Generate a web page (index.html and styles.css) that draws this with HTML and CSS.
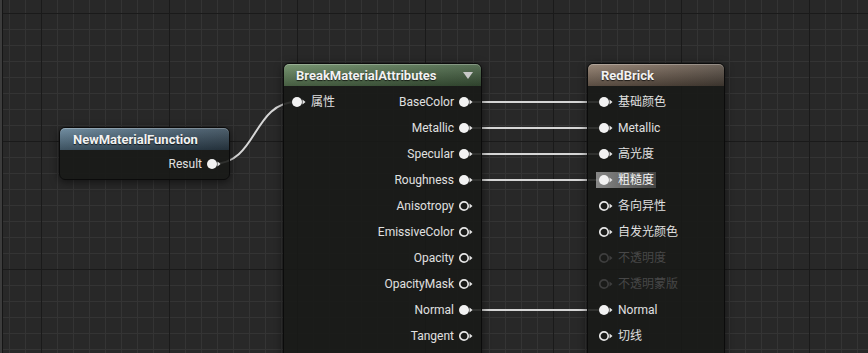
FILE: index.html
```html
<!DOCTYPE html>
<html lang="zh">
<head>
    <meta charset="UTF-8">
    <title>Material Graph - RedBrick</title>
    <link rel="stylesheet" href="styles.css">
</head>
<body>
    <div class="graph">
        <!-- wires sit under the nodes -->
        <svg class="wires" width="868" height="353" viewBox="0 0 868 353">
            <path d="M213 164 C258 164 252 102 297 102" />
            <path d="M464 102 L604 102" />
            <path d="M464 128 L604 128" />
            <path d="M464 154 L604 154" />
            <path d="M464 180 L604 180" />
            <path d="M464 310 L604 310" />
        </svg>

        <div class="node node-fn">
            <div class="node-header header-blue">NewMaterialFunction</div>
            <div class="node-body">
                <div class="pin-row out">
                    <span class="pin-label">Result</span>
                    <svg class="pin" width="14" height="12"><circle cx="5" cy="6" r="5" class="full"/><path d="M10.5 3.5 L13.5 6 L10.5 8.5 Z"/></svg>
                </div>
            </div>
        </div>

        <div class="node node-break">
            <div class="node-header header-green">
                <span>BreakMaterialAttributes</span>
                <span class="dropdown"></span>
            </div>
            <div class="node-body">
                <div class="pin-row split">
                    <div class="pin-item">
                        <svg class="pin" width="14" height="12"><circle cx="5" cy="6" r="5" class="full"/><path d="M10.5 3.5 L13.5 6 L10.5 8.5 Z"/></svg>
                        <span class="pin-label">属性</span>
                    </div>
                    <div class="pin-item">
                        <span class="pin-label">BaseColor</span>
                        <svg class="pin" width="14" height="12"><circle cx="5" cy="6" r="5" class="full"/><path d="M10.5 3.5 L13.5 6 L10.5 8.5 Z"/></svg>
                    </div>
                </div>
                <div class="pin-row out">
                    <span class="pin-label">Metallic</span>
                    <svg class="pin" width="14" height="12"><circle cx="5" cy="6" r="5" class="full"/><path d="M10.5 3.5 L13.5 6 L10.5 8.5 Z"/></svg>
                </div>
                <div class="pin-row out">
                    <span class="pin-label">Specular</span>
                    <svg class="pin" width="14" height="12"><circle cx="5" cy="6" r="5" class="full"/><path d="M10.5 3.5 L13.5 6 L10.5 8.5 Z"/></svg>
                </div>
                <div class="pin-row out">
                    <span class="pin-label">Roughness</span>
                    <svg class="pin" width="14" height="12"><circle cx="5" cy="6" r="5" class="full"/><path d="M10.5 3.5 L13.5 6 L10.5 8.5 Z"/></svg>
                </div>
                <div class="pin-row out">
                    <span class="pin-label">Anisotropy</span>
                    <svg class="pin" width="14" height="12"><circle cx="5" cy="6" r="4.2" class="ring"/><path d="M10.5 3.5 L13.5 6 L10.5 8.5 Z"/></svg>
                </div>
                <div class="pin-row out">
                    <span class="pin-label">EmissiveColor</span>
                    <svg class="pin" width="14" height="12"><circle cx="5" cy="6" r="4.2" class="ring"/><path d="M10.5 3.5 L13.5 6 L10.5 8.5 Z"/></svg>
                </div>
                <div class="pin-row out">
                    <span class="pin-label">Opacity</span>
                    <svg class="pin" width="14" height="12"><circle cx="5" cy="6" r="4.2" class="ring"/><path d="M10.5 3.5 L13.5 6 L10.5 8.5 Z"/></svg>
                </div>
                <div class="pin-row out">
                    <span class="pin-label">OpacityMask</span>
                    <svg class="pin" width="14" height="12"><circle cx="5" cy="6" r="4.2" class="ring"/><path d="M10.5 3.5 L13.5 6 L10.5 8.5 Z"/></svg>
                </div>
                <div class="pin-row out">
                    <span class="pin-label">Normal</span>
                    <svg class="pin" width="14" height="12"><circle cx="5" cy="6" r="5" class="full"/><path d="M10.5 3.5 L13.5 6 L10.5 8.5 Z"/></svg>
                </div>
                <div class="pin-row out">
                    <span class="pin-label">Tangent</span>
                    <svg class="pin" width="14" height="12"><circle cx="5" cy="6" r="4.2" class="ring"/><path d="M10.5 3.5 L13.5 6 L10.5 8.5 Z"/></svg>
                </div>
            </div>
        </div>

        <div class="node node-brick">
            <div class="node-header header-brown">RedBrick</div>
            <div class="node-body">
                <div class="pin-row">
                    <div class="pin-item">
                        <svg class="pin" width="14" height="12"><circle cx="5" cy="6" r="5" class="full"/><path d="M10.5 3.5 L13.5 6 L10.5 8.5 Z"/></svg>
                        <span class="pin-label">基础颜色</span>
                    </div>
                </div>
                <div class="pin-row">
                    <div class="pin-item">
                        <svg class="pin" width="14" height="12"><circle cx="5" cy="6" r="5" class="full"/><path d="M10.5 3.5 L13.5 6 L10.5 8.5 Z"/></svg>
                        <span class="pin-label">Metallic</span>
                    </div>
                </div>
                <div class="pin-row">
                    <div class="pin-item">
                        <svg class="pin" width="14" height="12"><circle cx="5" cy="6" r="5" class="full"/><path d="M10.5 3.5 L13.5 6 L10.5 8.5 Z"/></svg>
                        <span class="pin-label">高光度</span>
                    </div>
                </div>
                <div class="pin-row">
                    <div class="pin-item hovered">
                        <svg class="pin" width="14" height="12"><circle cx="5" cy="6" r="5" class="full"/><path d="M10.5 3.5 L13.5 6 L10.5 8.5 Z"/></svg>
                        <span class="pin-label">粗糙度</span>
                    </div>
                </div>
                <div class="pin-row">
                    <div class="pin-item">
                        <svg class="pin" width="14" height="12"><circle cx="5" cy="6" r="4.2" class="ring"/><path d="M10.5 3.5 L13.5 6 L10.5 8.5 Z"/></svg>
                        <span class="pin-label">各向异性</span>
                    </div>
                </div>
                <div class="pin-row">
                    <div class="pin-item">
                        <svg class="pin" width="14" height="12"><circle cx="5" cy="6" r="4.2" class="ring"/><path d="M10.5 3.5 L13.5 6 L10.5 8.5 Z"/></svg>
                        <span class="pin-label">自发光颜色</span>
                    </div>
                </div>
                <div class="pin-row disabled">
                    <div class="pin-item">
                        <svg class="pin" width="14" height="12"><circle cx="5" cy="6" r="4.2" class="ring"/><path d="M10.5 3.5 L13.5 6 L10.5 8.5 Z"/></svg>
                        <span class="pin-label">不透明度</span>
                    </div>
                </div>
                <div class="pin-row disabled">
                    <div class="pin-item">
                        <svg class="pin" width="14" height="12"><circle cx="5" cy="6" r="4.2" class="ring"/><path d="M10.5 3.5 L13.5 6 L10.5 8.5 Z"/></svg>
                        <span class="pin-label">不透明蒙版</span>
                    </div>
                </div>
                <div class="pin-row">
                    <div class="pin-item">
                        <svg class="pin" width="14" height="12"><circle cx="5" cy="6" r="5" class="full"/><path d="M10.5 3.5 L13.5 6 L10.5 8.5 Z"/></svg>
                        <span class="pin-label">Normal</span>
                    </div>
                </div>
                <div class="pin-row">
                    <div class="pin-item">
                        <svg class="pin" width="14" height="12"><circle cx="5" cy="6" r="4.2" class="ring"/><path d="M10.5 3.5 L13.5 6 L10.5 8.5 Z"/></svg>
                        <span class="pin-label">切线</span>
                    </div>
                </div>
            </div>
        </div>
    </div>
</body>
</html>
```

FILE: styles.css
```css
/* Base */
body {
    margin: 0;
    padding: 0;
    background-color: #282828;
    font-family: Roboto, "Noto Sans CJK SC", sans-serif;
    font-size: 12px;
    color: #e0e0e0;
    overflow: hidden;
}

/* Graph canvas with major (128px) and minor (16px) grid */
.graph {
    position: relative;
    width: 868px;
    height: 353px;
    overflow: hidden;
    background-color: #282828;
    background-image:
        linear-gradient(to right, #1a1a1a 1px, transparent 1px),
        linear-gradient(to bottom, #1a1a1a 1px, transparent 1px),
        linear-gradient(to right, #343434 1px, transparent 1px),
        linear-gradient(to bottom, #343434 1px, transparent 1px);
    background-size: 128px 128px, 128px 128px, 16px 16px, 16px 16px;
    background-position: 41px 0, 0 13px, 9px 0, 0 13px;
    box-shadow: inset 2px 0 0 #3c3c3c, inset 3px 0 0 #151515;
}

.wires {
    position: absolute;
    left: 0;
    top: 0;
}

.wires path {
    fill: none;
    stroke: #d6d6d6;
    stroke-width: 2;
}

/* Nodes */
.node {
    position: absolute;
    box-sizing: border-box;
    background-color: rgba(24, 25, 23, 0.88);
    border: 1px solid #0b0b0b;
    border-radius: 6px;
    box-shadow: 0 2px 8px rgba(0, 0, 0, 0.55);
}

.node-fn {
    left: 59px;
    top: 127px;
    width: 171px;
}

.node-break {
    left: 283px;
    top: 63px;
    width: 199px;
    height: 320px;
}

.node-brick {
    left: 587px;
    top: 63px;
    width: 138px;
    height: 320px;
}

.node-header {
    display: flex;
    align-items: center;
    height: 22px;
    padding: 0 8px 0 12px;
    border-radius: 5px 5px 0 0;
    font-size: 13px;
    font-weight: bold;
    color: #f2f2f2;
    text-shadow: 0 1px 1px rgba(0, 0, 0, 0.7);
    box-shadow: inset 0 1px 0 rgba(255, 255, 255, 0.25);
}

.header-blue {
    padding-left: 13px;
    background:
        linear-gradient(to bottom, rgba(255, 255, 255, 0.12), rgba(0, 0, 0, 0.35)),
        linear-gradient(to right, #5f7f95, #3f5769 70%, #364a59);
}

.header-green {
    background:
        linear-gradient(to bottom, rgba(255, 255, 255, 0.12), rgba(0, 0, 0, 0.3)),
        linear-gradient(to right, #66875f, #4d6b49 70%, #435e40);
}

.header-brown {
    padding-left: 13px;
    background:
        linear-gradient(to bottom, rgba(255, 255, 255, 0.12), rgba(0, 0, 0, 0.35)),
        linear-gradient(to right, #8c7867, #6a5b4e 70%, #5a4f45);
}

.dropdown {
    margin-left: auto;
    width: 0;
    height: 0;
    border-left: 5px solid transparent;
    border-right: 5px solid transparent;
    border-top: 7px solid #c8c8c8;
}

.node-body {
    padding: 3px 8px 0 8px;
}

.node-fn .node-body {
    padding-top: 1px;
    padding-bottom: 2px;
}

.node-break .node-body {
    padding-left: 5px;
}

/* Pin rows */
.pin-row {
    display: flex;
    align-items: center;
    height: 26px;
}

.pin-row.out {
    justify-content: flex-end;
}

.pin-row.split {
    justify-content: space-between;
}

.pin-row.out .pin-label {
    margin-right: 5px;
}

.pin-label {
    line-height: 16px;
}

.pin-item {
    display: flex;
    align-items: center;
    height: 16px;
    padding: 0 2px 0 3px;
}

.split .pin-item:last-child {
    padding: 0;
}

.split .pin-item:last-child .pin-label {
    margin-right: 5px;
}

.pin-item .pin + .pin-label {
    margin-left: 5px;
}

.pin-item.hovered {
    background: linear-gradient(to right, rgba(210, 210, 210, 0.6), rgba(130, 130, 130, 0.4));
    color: #f4f4f4;
}

.pin {
    display: block;
    flex: none;
}

.pin circle.full {
    fill: #f2f2f2;
}

.pin circle.ring {
    fill: #1a1b19;
    stroke: #e6e6e6;
    stroke-width: 1.7;
}

.pin path {
    fill: #e6e6e6;
}

.disabled {
    color: #474747;
}

.disabled .pin circle.ring {
    stroke: #3e3e3e;
}

.disabled .pin path {
    fill: #3e3e3e;
}
```
